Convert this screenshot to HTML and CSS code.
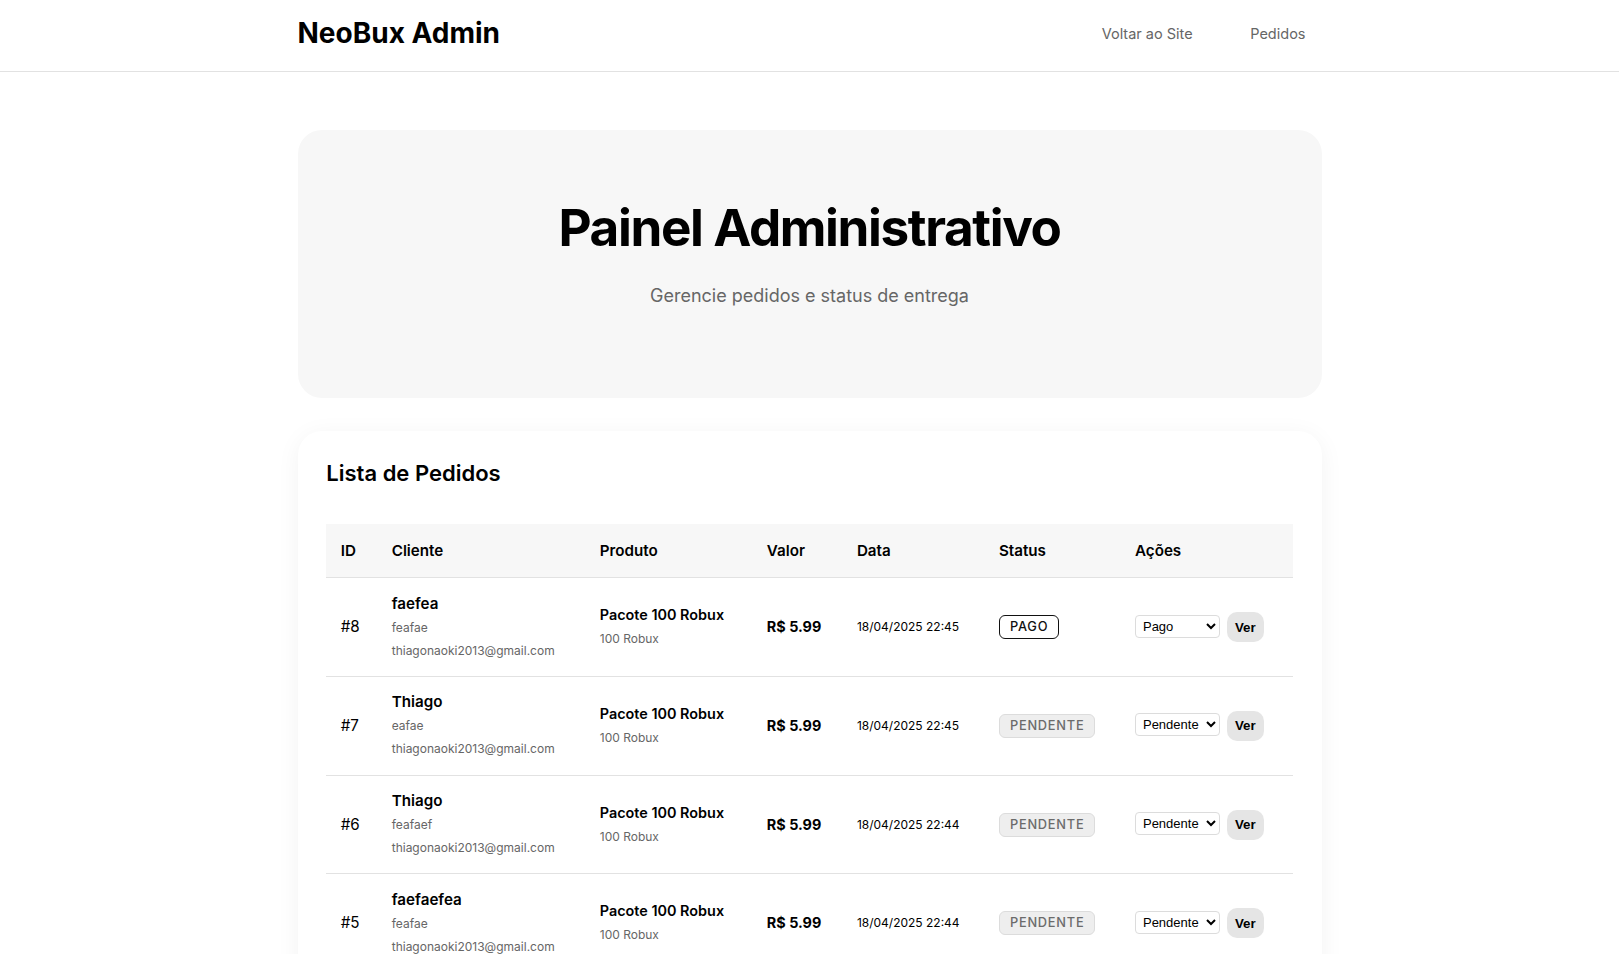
FILE: index.html
```html
<!DOCTYPE html>
<html lang="pt-BR">
<head>
<meta charset="utf-8">
<title>NeoBux Admin</title>
<link rel="stylesheet" href="styles.css">
</head>
<body>
<header class="topbar">
  <div class="container topbar-inner">
    <div class="logo">NeoBux Admin</div>
    <nav class="nav">
      <a href="#" class="nav-link">Voltar ao Site</a>
      <a href="#" class="nav-link">Pedidos</a>
    </nav>
  </div>
</header>
<main class="container main">
  <section class="hero">
    <h1 class="hero-title">Painel Administrativo</h1>
    <p class="hero-sub">Gerencie pedidos e status de entrega</p>
  </section>
  <section class="card">
    <h2 class="card-title">Lista de Pedidos</h2>
    <table class="orders">
      <colgroup>
        <col class="c-id"><col class="c-client"><col class="c-prod"><col class="c-val"><col class="c-date"><col class="c-status"><col class="c-act">
      </colgroup>
      <thead>
        <tr><th>ID</th><th>Cliente</th><th>Produto</th><th>Valor</th><th>Data</th><th>Status</th><th>Ações</th></tr>
      </thead>
      <tbody>
        <tr>
          <td class="id">#8</td>
          <td><div class="strong">faefea</div><div class="muted">feafae</div><div class="muted">thiagonaoki2013@gmail.com</div></td>
          <td><div class="strong prod">Pacote 100 Robux</div><div class="muted">100 Robux</div></td>
          <td class="price">R$ 5.99</td>
          <td class="date">18/04/2025 22:45</td>
          <td><span class="badge badge-paid">PAGO</span></td>
          <td><div class="actions"><select class="status-select"><option>Pago</option><option>Pendente</option><option>Entregue</option></select><button class="btn-ver">Ver</button></div></td>
        </tr>
        <tr>
          <td class="id">#7</td>
          <td><div class="strong">Thiago</div><div class="muted">eafae</div><div class="muted">thiagonaoki2013@gmail.com</div></td>
          <td><div class="strong prod">Pacote 100 Robux</div><div class="muted">100 Robux</div></td>
          <td class="price">R$ 5.99</td>
          <td class="date">18/04/2025 22:45</td>
          <td><span class="badge badge-pending">PENDENTE</span></td>
          <td><div class="actions"><select class="status-select"><option>Pendente</option><option>Pago</option><option>Entregue</option></select><button class="btn-ver">Ver</button></div></td>
        </tr>
        <tr>
          <td class="id">#6</td>
          <td><div class="strong">Thiago</div><div class="muted">feafaef</div><div class="muted">thiagonaoki2013@gmail.com</div></td>
          <td><div class="strong prod">Pacote 100 Robux</div><div class="muted">100 Robux</div></td>
          <td class="price">R$ 5.99</td>
          <td class="date">18/04/2025 22:44</td>
          <td><span class="badge badge-pending">PENDENTE</span></td>
          <td><div class="actions"><select class="status-select"><option>Pendente</option><option>Pago</option><option>Entregue</option></select><button class="btn-ver">Ver</button></div></td>
        </tr>
        <tr>
          <td class="id">#5</td>
          <td><div class="strong">faefaefea</div><div class="muted">feafae</div><div class="muted">thiagonaoki2013@gmail.com</div></td>
          <td><div class="strong prod">Pacote 100 Robux</div><div class="muted">100 Robux</div></td>
          <td class="price">R$ 5.99</td>
          <td class="date">18/04/2025 22:44</td>
          <td><span class="badge badge-pending">PENDENTE</span></td>
          <td><div class="actions"><select class="status-select"><option>Pendente</option><option>Pago</option><option>Entregue</option></select><button class="btn-ver">Ver</button></div></td>
        </tr>
      </tbody>
    </table>
  </section>
</main>
</body>
</html>
```

FILE: styles.css
```css
* { box-sizing: border-box; }

html, body {
  margin: 0;
  padding: 0;
  background: #ffffff;
}

body {
  font-family: "Inter", "Noto Sans", sans-serif;
  color: #000;
  padding-right: 5px;
}

.container {
  width: 1024px;
  margin: 0 auto;
}

.topbar {
  height: 72px;
  border-bottom: 1px solid #e2e2e2;
}

.topbar-inner {
  height: 71px;
  display: flex;
  align-items: center;
  justify-content: space-between;
}

.logo {
  font-size: 28px;
  font-weight: 700;
  line-height: 1;
  margin-top: -5px;
}

.nav {
  display: flex;
  gap: 25.6px;
  margin-top: -4px;
}

.nav-link {
  color: #666;
  text-decoration: none;
  font-size: 14.5px;
  padding: 0 16px;
}

.main {
  padding-top: 58px;
}

.hero {
  background: #f7f7f7;
  border-radius: 24px;
  padding: 67px 32px 89px;
  text-align: center;
}

.hero-title {
  margin: 0 0 23.5px;
  font-size: 51.2px;
  font-weight: 700;
  line-height: 1.2;
  letter-spacing: -0.027em;
}

.hero-sub {
  margin: 0;
  font-size: 18px;
  line-height: 1.5;
  color: #666;
}

.card {
  margin-top: 33px;
  background: #fff;
  border-radius: 24px;
  padding: 28.8px;
  box-shadow: 0 4px 24px rgba(0, 0, 0, 0.05);
}

.card-title {
  margin: -1px 0 37px;
  font-size: 22px;
  font-weight: 600;
  line-height: 1.3;
}

.orders {
  width: 100%;
  border-collapse: collapse;
  table-layout: fixed;
}

.c-id { width: 51px; }
.c-client { width: 208px; }
.c-prod { width: 167px; }
.c-val { width: 90px; }
.c-date { width: 142px; }
.c-status { width: 136px; }
.c-act { width: 172px; }

.orders th {
  background: #f7f7f7;
  text-align: left;
  font-size: 15.2px;
  font-weight: 600;
  line-height: 24px;
  padding: 14.4px;
  border-bottom: 1px solid #e2e2e2;
}

.orders td {
  padding: 14.4px;
  vertical-align: middle;
  border-bottom: 1px solid #e2e2e2;
  font-size: 15.2px;
  line-height: 22px;
}

.strong {
  font-weight: 600;
  font-size: 15.2px;
  line-height: 22px;
  margin-bottom: 1px;
}

.strong.prod {
  font-size: 14.4px;
}

.muted {
  color: #666;
  font-size: 12px;
  line-height: 23px;
}

.orders td.price {
  font-weight: 700;
  font-size: 14.4px;
}

.orders td.date {
  font-size: 12px;
}

.badge {
  display: inline-block;
  font-size: 12.8px;
  font-weight: 500;
  letter-spacing: 0.06em;
  line-height: 20px;
  padding: 1px 10px;
  border-radius: 6px;
}

.badge-paid {
  background: #fff;
  border: 1.5px solid #111;
  color: #111;
}

.badge-pending {
  background: #eeeeee;
  border: 1px solid #dcdcdc;
  color: #6b6b6b;
}

.actions {
  display: flex;
  align-items: center;
  gap: 7px;
}

.status-select {
  width: 85px;
  height: 23px;
  font-family: "Liberation Sans", Arial, sans-serif;
  font-size: 13px;
  color: #000;
  background: #fff;
  border: 1px solid #dcdcdc;
  border-radius: 4px;
  padding: 0 3px;
  margin-top: -2px;
}

.btn-ver {
  height: 30px;
  padding: 0 8px;
  border: none;
  border-radius: 10px;
  background: #e5e5e5;
  font-family: "Liberation Sans", Arial, sans-serif;
  font-size: 13.3px;
  font-weight: 700;
  color: #000;
}
```
